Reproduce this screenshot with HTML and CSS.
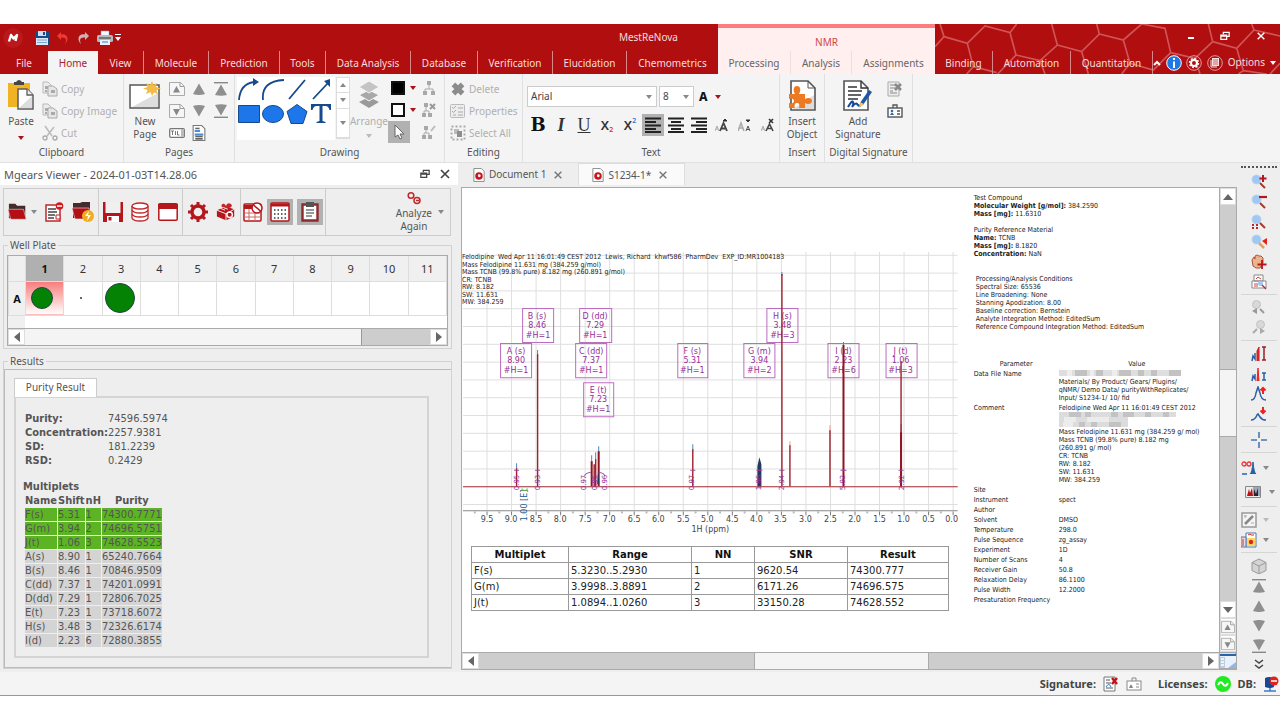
FILE: index.html
```html
<!DOCTYPE html>
<html lang="en">
<head>
<meta charset="utf-8">
<title>MestReNova</title>
<link rel="stylesheet" href="styles.css">
</head>
<body>
<svg class="sprite" aria-hidden="true">
  <defs>
    <symbol id="logo" viewBox="0 0 22 22"><circle cx="11" cy="11" r="10" fill="#bb181b"/><path d="M7 14.500L9 8l2.500 3.500L15 8l-1.500 6" fill="none" stroke="#fff" stroke-width="2.400" stroke-linejoin="round"/></symbol>
    <symbol id="save" viewBox="0 0 14 14"><path d="M0 0h14v14H0z" fill="#174a86"/><path d="M3 0h8v5H3z" fill="#cfe0f2"/><path d="M8 1h2v3H8z" fill="#174a86"/><path d="M1 7h12v7H1z" fill="#d8e8f8"/><path d="M2 9h10M2 11.500h10" stroke="#7fa6cc"/></symbol>
    <symbol id="undo" viewBox="0 0 12 12"><path d="M0 4l4-4v2.500c6-1 9 4 4 9.500 2-4 1-7-4-6.500V8z" fill="#ee3a34"/></symbol>
    <symbol id="redo" viewBox="0 0 12 12"><path d="M12 4L8 0v2.500C2 1.500-1 6.500 4 12 2 8 3 5 8 5.500V8z" fill="#c9b5b5"/></symbol>
    <symbol id="print" viewBox="0 0 16 14"><path d="M4 0h8v5H4z" fill="#f4f8ff" stroke="#8ab" stroke-width=".5"/><rect y="4" width="16" height="7" rx="1.500" fill="#b5b8bc"/><path d="M2 6h12v2H2z" fill="#777"/><path d="M3 9h10v5H3z" fill="#e8f2ff"/><path d="M5 11h6" stroke="#57a"/></symbol>
    <symbol id="paste" viewBox="0 0 26 30"><path d="M0 3h22v24H0z" fill="#f0b323"/><path d="M6 4V2h2q3-4 6 0h2v3H6z" fill="#454545"/><path d="M10 9h9l6 6v14H10z" fill="#fff" stroke="#5c5c5c" stroke-width="1.500"/><path d="M19 9v6h6" fill="#eee" stroke="#5c5c5c" stroke-width="1.300"/><path d="M11 28L24 16v12z" fill="#ddd"/></symbol>
    <symbol id="copy" viewBox="0 0 16 16"><path d="M1 1h5l3 3v8H1z" fill="#ececec" stroke="#b9b9b9"/><path d="M6 5h5l4 3v7H6z" fill="#e6e6e6" stroke="#aaa"/><path d="M3 5h3v3H3zM9 9h4v3H9zM3 9h2v2H3z" fill="#aaa"/></symbol>
    <symbol id="cut" viewBox="0 0 16 16"><path d="M3 1l7 10M12 2L5 11" stroke="#bbb" stroke-width="1.500"/><circle cx="3" cy="13" r="2" fill="none" stroke="#aaa" stroke-width="1.300"/><circle cx="13" cy="13" r="2" fill="none" stroke="#aaa" stroke-width="1.300"/></symbol>
    <symbol id="newpage" viewBox="0 0 32 28"><path d="M1 4h29v23H1z" fill="#fff" stroke="#555" stroke-width="1.500"/><path d="M3 26L29 12v14z" fill="#ddd"/><path d="M23 0l1.500 4L28 2l-1 4 5 1.500-4.500 1.800L29 13l-4-1.500L23 15l-1.500-4L17 13l1.500-4L14 7.500 18.500 6 17 2l4 2z" fill="#f4bb45"/></symbol>
    <symbol id="pgup" viewBox="0 0 16 14"><path d="M.5.500h11l4 4v9H.5z" fill="#f6f6f6" stroke="#aaa"/><path d="M11 .500v4h4" fill="none" stroke="#999"/><path d="M4 10.500L7.500 4l3.500 6.500z" fill="#888"/></symbol>
    <symbol id="pgdown" viewBox="0 0 16 14"><path d="M.5.500h11l4 4v9H.5z" fill="#f6f6f6" stroke="#aaa"/><path d="M11 .500v4h4" fill="none" stroke="#999"/><path d="M4 5l3.500 6.500L11 5z" fill="#888"/></symbol>
    <symbol id="up" viewBox="0 0 14 14"><path d="M7 1.500L13 12q-6 2-12 0z" fill="#8f8f8f"/></symbol>
    <symbol id="down" viewBox="0 0 14 14"><path d="M7 12.500L13 2Q7 0 1 2z" fill="#8f8f8f"/></symbol>
    <symbol id="top" viewBox="0 0 14 14"><path d="M0 .700h14" stroke="#888" stroke-width="1.400"/><path d="M7 2.500l6 10.500q-6 1.500-12 0z" fill="#8f8f8f"/></symbol>
    <symbol id="bottom" viewBox="0 0 14 14"><path d="M0 13.300h14" stroke="#888" stroke-width="1.400"/><path d="M7 11.500L13 1Q7-.500 1 1z" fill="#8f8f8f"/></symbol>
    <symbol id="titlebox" viewBox="0 0 16 10"><rect x=".7" y=".7" width="14.600" height="8.600" rx="1" fill="#fff" stroke="#777" stroke-width="1.300"/><path d="M2 3h3M3.500 3v4M6.500 3v4M8.500 3v4h2" stroke="#777" fill="none"/><path d="M12 1v8h3V1z" fill="#bbb"/></symbol>
    <symbol id="report" viewBox="0 0 12 15"><path d="M.5.500h8l3 3v11H.5z" fill="#fff" stroke="#777"/><path d="M2.500 3h4M2.500 11h7M2.500 13h7" stroke="#333"/><path d="M2 4.500h5v2H2zM2 8h8v2H2z" fill="#4b8ddd"/></symbol>
    <symbol id="shapes" viewBox="0 0 96 62"><g fill="none" stroke="#154a8c" stroke-width="1.800"><path d="M2 22Q3 6 17 4M26 22Q24 3 47 2M52 21L68 2M76 21L91 5"/></g><path d="M16 0l6 4-6 4zM93 1v8l-6-6z" fill="#154a8c"/><g fill="#1e77ea" stroke="#154a8c"><path d="M1.500 27.500h21v17h-21z"/><ellipse cx="36" cy="36" rx="10.500" ry="8.500"/><path d="M60 26.500l10 7-4 12H54l-4-12z"/></g><path d="M74 26h20v6h-1.500q-1-4-4-4h-3v15l3 1v1h-9v-1l3-1V28h-3q-3 0-4 4H74z" fill="#154a8c"/></symbol>
    <symbol id="layers" viewBox="0 0 20 28"><path d="M0 21l10-5 10 5-10 6z" fill="#9a9a9a"/><path d="M0 14l10-5 10 5-10 6z" fill="#a8a8a8" stroke="#f4f4f4"/><path d="M0 6l10-6 10 6-10 6z" fill="#c4c4c4" stroke="#f4f4f4"/></symbol>
    <symbol id="tree" viewBox="0 0 14 14"><path d="M7 4v4M3 11V8h8v3" fill="none" stroke="#aaa"/><path d="M5 0h4v4H5zM1 10h4v4H1zM9 10h4v4H9z" fill="#a8a8a8"/></symbol>
    <symbol id="treex" viewBox="0 0 14 14"><path d="M4 4v4M2 11V8h5v3" fill="none" stroke="#aaa"/><path d="M2 0h4v4H2zM0 10h4v4H0zM6 10h4v4H6z" fill="#a8a8a8"/><path d="M8 1l5 5M13 1L8 6" stroke="#999" stroke-width="2"/></symbol>
    <symbol id="treeedit" viewBox="0 0 14 14"><path d="M4 5v3M2 11V8h5v3" fill="none" stroke="#aaa"/><path d="M2 1h4v4H2zM0 10h4v4H0zM6 10h4v4H6z" fill="#a8a8a8"/><path d="M13 1L9 6" stroke="#bbb" stroke-width="2"/></symbol>
    <symbol id="cursor" viewBox="0 0 12 16"><path d="M2 1v12l3-2 2 4 2-1-2-4h4z" fill="#fff" stroke="#666"/></symbol>
    <symbol id="cross" viewBox="0 0 14 14"><path d="M3 3l8 8M11 3l-8 8" stroke="#8c8c8c" stroke-width="4.500"/></symbol>
    <symbol id="props" viewBox="0 0 16 16"><rect x=".5" y="1.500" width="14" height="13" rx="1" fill="#ededed" stroke="#bbb"/><path d="M2 4l1.500 1.500L6 3M2 8l1.500 1.500L6 7M3 12h3M8 5h5M8 9h5M8 12h5" stroke="#aaa" fill="none"/></symbol>
    <symbol id="selall" viewBox="0 0 16 16"><path d="M1.500 1.500h13v13h-13z" fill="none" stroke="#aaa" stroke-width="2" stroke-dasharray="2 2"/><path d="M4 4h5v5H4z" fill="#bbb"/><path d="M7 6h5v6H7z" fill="#8e8e8e"/></symbol>
    <symbol id="left" viewBox="0 0 16 16"><path d="M0 1.500h16M0 5h11M0 8.500h16M0 12h11M0 15h16" stroke="#222" stroke-width="1.800"/></symbol>
    <symbol id="center" viewBox="0 0 16 16"><path d="M0 1.500h16M3 5h10M0 8.500h16M3 12h10M0 15h16" stroke="#222" stroke-width="1.800"/></symbol>
    <symbol id="right" viewBox="0 0 16 16"><path d="M0 1.500h16M5 5h11M0 8.500h16M5 12h11M0 15h16" stroke="#222" stroke-width="1.800"/></symbol>
    <symbol id="puzzle" viewBox="0 0 30 32"><path d="M4 1h17l7 7v22H4z" fill="#fff" stroke="#555" stroke-width="1.600"/><path d="M6 29L27 15v14z" fill="#ddd"/><path d="M21 1v7h7" fill="none" stroke="#555"/><path d="M2 14h6c-2-3-2-8 2-8s4 5 2 8h6v5c3-2 7-1 7 2s-4 4-7 2v5h-6c1-3 0-5-2-5s-3 2-2 5H2v-5c3 1 5 0 5-2s-2-3-5-2z" fill="#ec7a22"/></symbol>
    <symbol id="sign" viewBox="0 0 30 32"><path d="M1 1h17l7 7v22H1z" fill="#fff" stroke="#555" stroke-width="1.600"/><path d="M18 1v7h7M5 7h9M5 11h14M5 15h13M5 19h10" fill="none" stroke="#333" stroke-width="1.400"/><path d="M5 27q4-7 5-5t-1 5q4-5 5-3t4 2" fill="none" stroke="#164a94" stroke-width="2"/><path d="M17 23l9-13 3 2-9 13z" fill="#1d57ac"/><path d="M17 22l4 2-5 4z" fill="#f3c265"/></symbol>
    <symbol id="signx" viewBox="0 0 16 16"><path d="M1 1h11v14H1z" fill="#eee" stroke="#aaa"/><path d="M3 4h5M3 7h6M3 12h7M3 10h3" stroke="#888"/><path d="M8 3l6 6M14 3L8 9" stroke="#888" stroke-width="2.500"/></symbol>
    <symbol id="signred" viewBox="0 0 16 16"><path d="M1 1h11v14H1z" fill="#fff" stroke="#777"/><path d="M3 4h4M3 7h5M3 12h7" stroke="#555"/><path d="M3 11q3-5 5 0" stroke="#37a" fill="none"/><path d="M9 2l5 6M14 2L9 8" stroke="#c4121c" stroke-width="2.500"/></symbol>
    <symbol id="badge" viewBox="0 0 16 14"><rect x="1" y="4" width="14" height="9" fill="#fff" stroke="#555" stroke-width="1.400"/><path d="M6 4V1h4v3M10 7h3M10 10h3" stroke="#555" fill="none" stroke-width="1.300"/><circle cx="5" cy="7" r="1.300" fill="#2b6dbb"/><path d="M3 11q2-5 4 0z" fill="#2b6dbb"/></symbol>
    <symbol id="badgegray" viewBox="0 0 16 14"><rect x="1" y="4" width="14" height="9" fill="#fff" stroke="#888"/><path d="M6 4V1h4v3M10 7h3M10 10h3" stroke="#888" fill="none"/><path d="M3 11q2-7 4 0z" fill="#888"/></symbol>
    <symbol id="info" viewBox="0 0 16 16"><circle cx="8" cy="8" r="7.300" fill="#1e78e6" stroke="#fff"/><path d="M8 3v2M8 6.500V13" stroke="#fff" stroke-width="2"/></symbol>
    <symbol id="cog" viewBox="0 0 16 16"><circle cx="8" cy="8" r="7.300" fill="none" stroke="#e39a9c"/><circle cx="8" cy="8" r="3" fill="none" stroke="#fff" stroke-width="2"/><circle cx="8" cy="8" r="4.500" fill="none" stroke="#fff" stroke-width="1.500" stroke-dasharray="1.800 1.700"/></symbol>
    <symbol id="doccirc" viewBox="0 0 16 16"><circle cx="8" cy="8" r="7.300" fill="none" stroke="#e39a9c"/><path d="M5 3h7v8H5z" fill="#f7e3e3"/><path d="M4 5v7h6" fill="none" stroke="#f7e3e3"/><path d="M6 5h5M6 7h5M6 9h5" stroke="#c66"/></symbol>
    <symbol id="restore" viewBox="0 0 12 12"><path d="M4 4V1.500h7v5H8" fill="none" stroke="currentColor" stroke-width="1.500"/><path d="M1 5h7v5H1zM1 6h7" fill="none" stroke="currentColor" stroke-width="1.500"/></symbol>
    <symbol id="close" viewBox="0 0 12 12"><path d="M2 2l8 8M10 2l-8 8" stroke="currentColor" stroke-width="1.700"/></symbol>
    <symbol id="folder" viewBox="0 0 22 20"><path d="M1 4V1h7l2 2h9v14H1z" fill="#452b2b"/><path d="M0 7h17l3 11H3z" fill="#b30f14" stroke="#eee" stroke-width=".6"/></symbol>
    <symbol id="folderb" viewBox="0 0 22 20"><path d="M1 4V1h7l2-1h8v16H1z" fill="#452b2b"/><path d="M0 6h17l2 11H3z" fill="#b30f14" stroke="#eee" stroke-width=".6"/><circle cx="16" cy="14" r="6" fill="#f0ad1f"/><path d="M17 9l-4 5h3l-1 5 4-6h-3z" fill="#fff"/></symbol>
    <symbol id="docminus" viewBox="0 0 20 20"><path d="M2 3h14v16H2z" fill="#fff" stroke="#c0272b" stroke-width="1.500"/><path d="M4 7h8M4 10h9M4 13h7M4 16h6" stroke="#444" stroke-width="1.500"/><circle cx="15.500" cy="4" r="3.800" fill="#d3191e"/><path d="M13 4h5" stroke="#fff" stroke-width="1.500"/><path d="M12 13h4v4h-4z" fill="#fff" stroke="#c0272b"/></symbol>
    <symbol id="floppy" viewBox="0 0 20 20"><path d="M0 0h20v20H0z" fill="#b5161b"/><path d="M2.500 0h15v11h-15z" fill="#f0f0f0"/><path d="M4 14h12v6H4z" fill="#fff"/><path d="M5.500 15h3v3.500h-3z" fill="#b5161b"/></symbol>
    <symbol id="dbase" viewBox="0 0 20 20"><g fill="#fff" stroke="#c0272b" stroke-width="1.300"><path d="M2 4v12q1 3 8 3t8-3V4"/><ellipse cx="10" cy="4" rx="8" ry="3"/><path d="M2 8q1 3 8 3t8-3M2 12q1 3 8 3t8-3" fill="none"/></g></symbol>
    <symbol id="window" viewBox="0 0 20 18"><rect x=".8" y=".8" width="18.400" height="16.400" rx="1" fill="#fff" stroke="#b5161b" stroke-width="1.500"/><path d="M0 1h20v5H0z" fill="#b5161b"/></symbol>
    <symbol id="gear" viewBox="0 0 22 22"><circle cx="11" cy="11" r="6" fill="none" stroke="#b5161b" stroke-width="3.400"/><path d="M11 1v4M11 17v4M1 11h4M17 11h4M4 4l3 3M15 15l3 3M18 4l-3 3M7 15l-3 3" stroke="#b5161b" stroke-width="3"/></symbol>
    <symbol id="boxes" viewBox="0 0 22 20"><path d="M1 8l10-4 9 3v8l-9 4-10-4z" fill="#b5161b"/><path d="M1 8l10 4 9-5M11 12v7" stroke="#fff" fill="none"/><path d="M6 4q0-4 3-3l2 2q2-4 5-2t0 4l-5 2z" fill="#c4262a"/><circle cx="15" cy="13" r="3" fill="none" stroke="#fff" stroke-width="1.500"/><path d="M5 6l5 2M8 5l5 2" stroke="#fff"/></symbol>
    <symbol id="gridno" viewBox="0 0 20 20"><rect x="1" y="2" width="17" height="17" rx="1" fill="#fff" stroke="#b5161b" stroke-width="1.500"/><path d="M1 5h17" stroke="#b5161b" stroke-width="4"/><path d="M6 7v12M12 7v12M1 11h17M1 15h17" stroke="#c66"/><circle cx="14" cy="6" r="5" fill="#fff" stroke="#b5161b" stroke-width="1.500"/><path d="M10.500 3l7 6" stroke="#b5161b" stroke-width="1.500"/></symbol>
    <symbol id="grid" viewBox="0 0 20 20"><rect x="1" y="1" width="18" height="18" rx="1" fill="#fff" stroke="#b5161b" stroke-width="1.500"/><path d="M1 3h18" stroke="#b5161b" stroke-width="3"/><path d="M4 8h13M4 12h13M4 16h13" stroke="#333" stroke-width="1.600" stroke-dasharray="1.500 2"/></symbol>
    <symbol id="clip" viewBox="0 0 18 20"><path d="M1.500 2.500h15v16h-15z" fill="#fff" stroke="#8d2a2f" stroke-width="2.400"/><path d="M5 0h8v5H5z" fill="#555"/><path d="M5 8h8M5 11h8M5 14h6" stroke="#777" stroke-width="1.300"/></symbol>
    <symbol id="gears" viewBox="0 0 14 13"><g fill="none" stroke="#c0272b" stroke-width="1.500"><circle cx="4" cy="4" r="2.800"/><circle cx="10" cy="9" r="3"/><path d="M9 9h3"/></g></symbol>
    <symbol id="doc" viewBox="0 0 12 15"><path d="M.5.500h8l3 3v11H.5z" fill="#fff" stroke="#888"/><circle cx="6" cy="8.500" r="4" fill="#c8161c"/><circle cx="6.300" cy="8.300" r="1.500" fill="#fff"/></symbol>
    <symbol id="lens" viewBox="0 0 16 16"><circle cx="5.500" cy="5.500" r="4.500" fill="#9ec8f5" stroke="#bcd3ea"/><path d="M9 9l5 5" stroke="#a33a2a" stroke-width="2"/></symbol>
    <symbol id="zin" viewBox="0 0 16 16"><use href="#lens"/><path d="M12 1v7M8.500 4.500h7" stroke="#b3161c" stroke-width="2"/></symbol>
    <symbol id="zout" viewBox="0 0 16 16"><use href="#lens"/><path d="M8 3h8" stroke="#b3161c" stroke-width="2.200"/></symbol>
    <symbol id="zsel" viewBox="0 0 16 16"><use href="#lens"/><path d="M1 10h2v2H1zM5 10h2v2H5zM1 13h2v2H1zM5 13h2v2H5z" fill="#c0272b"/></symbol>
    <symbol id="zprev" viewBox="0 0 16 16"><circle cx="5.500" cy="5.500" r="4.500" fill="#9ec8f5" stroke="#bcd3ea"/><path d="M11 7l5-3v7z" fill="#e2231a"/><path d="M8 9l5 5" stroke="#e3a15c" stroke-width="2.500"/></symbol>
    <symbol id="pan" viewBox="0 0 16 16"><path d="M2 12L1 6l2-3 1 2V2l2-1 2 1 2 0 2 2v5l-3 5H5z" fill="#efb38c" stroke="#a4563a"/><path d="M11 6v9M6.500 10.500h9" stroke="#b3161c" stroke-width="1.800"/></symbol>
    <symbol id="pagezoom" viewBox="0 0 16 16"><path d="M3 1h9v6H3zM1 7h14v7H1z" fill="#fff" stroke="#888"/><path d="M5 5l2-2 3 2M3 10h4M3 12h4" stroke="#c44" fill="none"/><circle cx="9.500" cy="9.500" r="2.500" fill="#9ec8f5"/><path d="M11 11l4 4" stroke="#a33" stroke-width="1.500"/></symbol>
    <symbol id="histback" viewBox="0 0 16 16"><circle cx="5.500" cy="4.500" r="4" fill="#d8d8d8" stroke="#c2c2c2"/><path d="M1 11l5-3v6z" fill="#999"/><path d="M9 9l4 4" stroke="#999" stroke-width="2"/></symbol>
    <symbol id="histfwd" viewBox="0 0 16 16"><circle cx="9.500" cy="4.500" r="4" fill="#d8d8d8" stroke="#c2c2c2"/><path d="M9 8v6l5-3z" fill="#aaa"/><path d="M6 9l-4 4" stroke="#aaa" stroke-width="2"/></symbol>
    <symbol id="fit1" viewBox="0 0 16 16"><path d="M1 15l1-5 2 3V7" stroke="#2860a8" fill="none" stroke-width="1.500"/><path d="M6 15V5l2-4v14" fill="#e22" stroke="#b22"/><path d="M11 1h4M13 1v13M11 14h4" stroke="#922" stroke-width="1.500"/></symbol>
    <symbol id="fit2" viewBox="0 0 16 16"><path d="M1 15l1-5 2 3V8" stroke="#2860a8" fill="none" stroke-width="1.500"/><path d="M6 15l1-13 1 13" fill="#e22" stroke="#e22"/><path d="M11 7h4M13 7v7M11 14h4" stroke="#2860a8" stroke-width="1.500"/></symbol>
    <symbol id="incr" viewBox="0 0 16 16"><path d="M0 14q4 0 5-7l2-6 2 6q1 7 6 7" stroke="#2860a8" fill="none" stroke-width="1.500"/><path d="M12 8V3M9.500 4.500L12 2l2.500 2.500" stroke="#e22" stroke-width="2" fill="none"/></symbol>
    <symbol id="decr" viewBox="0 0 16 16"><path d="M0 14q4 0 6-5l1-1 2 3q2 3 6 3" stroke="#2860a8" fill="none" stroke-width="1.500"/><path d="M12 1v5M9.500 4.500L12 7l2.500-2.500" stroke="#e22" stroke-width="2" fill="none"/></symbol>
    <symbol id="hair" viewBox="0 0 16 16"><path d="M8 0v6M8 10v6M0 8h6M10 8h6" stroke="#4a78b0" stroke-width="1.600"/></symbol>
    <symbol id="phase" viewBox="0 0 16 16"><circle cx="3" cy="4" r="2" fill="none" stroke="#e33" stroke-width="1.300"/><circle cx="8" cy="4" r="2" fill="none" stroke="#e33" stroke-width="1.300"/><path d="M1 14h5" stroke="#2860a8" stroke-width="1.500"/><path d="M9 14q2-1 3-12 1 11 3 12" fill="#2860a8" stroke="#2860a8"/></symbol>
    <symbol id="stack" viewBox="0 0 16 16"><path d="M.5 2.500h15v11H.5z" fill="#eee" stroke="#888"/><path d="M2 12l2-7 1 4 2-5 1 8z" fill="#b11"/><path d="M8 3h7v9H8z" fill="#9ab"/><path d="M9 12V5l2 5 2-6v8z" fill="#223"/></symbol>
    <symbol id="crossout" viewBox="0 0 16 16"><path d="M1 1h14v14H1z" fill="#f4f4f4" stroke="#999" stroke-width="1.500"/><path d="M4 12l8-8" stroke="#888" stroke-width="2.500"/><path d="M3 4h3M4 3v3M10 11h3" stroke="#aaa"/></symbol>
    <symbol id="map" viewBox="0 0 16 16"><path d="M5 1h10v14H5z" fill="#fff" stroke="#4a78b0"/><path d="M0 5h5v10H0z" fill="#ebd5da" stroke="#4a78b0"/><path d="M2 14V7M7 3l2-1 1 1h3" stroke="#c33" fill="none"/><path d="M6 6h8v8H6z" fill="#ffd65c"/><circle cx="10" cy="10" r="2.200" fill="#d22"/></symbol>
    <symbol id="cube" viewBox="0 0 16 16"><path d="M8 1l7 3.500v8L8 16l-7-3.500v-8z" fill="#d4d4d4" stroke="#999"/><path d="M1 4.500L8 8l7-3.500M8 8v8" fill="none" stroke="#999"/></symbol>
    <symbol id="more" viewBox="0 0 10 12"><path d="M1 2l4 3 4-3M1 7l4 3 4-3" fill="none" stroke="#444" stroke-width="1.500"/></symbol>
    <symbol id="layout" viewBox="0 0 16 14"><path d="M0 0h16v14H0z" fill="#e9f2fc"/><path d="M0 1h16" stroke="#2e62a8" stroke-width="2"/><path d="M0 3h5v11H0z" fill="#bcd"/><path d="M1 5h3M1 8h3M1 11h3" stroke="#fff" stroke-width="1.500"/><path d="M8 14l8-6v6z" fill="#8db9ea"/></symbol>
    <symbol id="license" viewBox="0 0 16 16"><circle cx="8" cy="8" r="8" fill="#22ea22"/><path d="M3 9q2.500-5 5-1t5-1" fill="none" stroke="#fff" stroke-width="2"/></symbol>
    <symbol id="dbmin" viewBox="0 0 16 16"><path d="M2 2q4-2 9 0v9q-4 2-9 0z" fill="#164a94"/><path d="M1 15h12M7 12v3" stroke="#3c7ad0" stroke-width="1.500"/><circle cx="11" cy="5" r="4.500" fill="#e2231a"/><path d="M8 5h6" stroke="#fff" stroke-width="1.500"/></symbol>
    <symbol id="fontup" viewBox="0 0 14 14"><path d="M0 13l2-5 2 5M1 11h2" stroke="#aaa" fill="none"/><path d="M5 13L8.500 5l3.500 8M6 10.500h5" stroke="#444" fill="none" stroke-width="1.800"/><path d="M8 3l2-2 2 2z" fill="#333" stroke="#333"/></symbol>
    <symbol id="fontdown" viewBox="0 0 14 14"><path d="M0 13l3-8 3 8M1 10h4" stroke="#aaa" fill="none" stroke-width="1.600"/><path d="M8 13l2-5 2 5M8.500 11.500h3" stroke="#555" fill="none"/><path d="M8 2l2 2 2-2z" fill="#333" stroke="#333"/></symbol>
    <symbol id="fontclear" viewBox="0 0 14 14"><path d="M0 13l2-5 2 5M1 11h2" stroke="#aaa" fill="none"/><path d="M5 13l3.500-7 3.500 7M6 10.500h5" stroke="#444" fill="none" stroke-width="1.600"/><path d="M8 1l4 4M12 1L8 5" stroke="#333" stroke-width="1.600"/></symbol>
  </defs>
</svg>

<div class="app">
  <header class="header">
    <section class="head head-main">
      <div class="quick">
        <svg class="i22"><use href="#logo"/></svg>
        <button class="flat save" aria-label="Save"><svg class="i14"><use href="#save"/></svg></button>
        <button class="flat" aria-label="Undo"><svg class="i12"><use href="#undo"/></svg></button>
        <button class="flat" aria-label="Redo"><svg class="i12"><use href="#redo"/></svg></button>
        <button class="flat" aria-label="Print"><svg class="i16"><use href="#print"/></svg></button>
        <button class="flat more" aria-label="Customize toolbar"><i class="caret light"></i></button>
        <h1 class="title">MestReNova</h1>
      </div>
      <nav class="tabs tabs-main">
        <button class="tab plain">File</button><button class="tab active">Home</button><button class="tab">View</button><button class="tab">Molecule</button><button class="tab">Prediction</button><button class="tab">Tools</button><button class="tab">Data Analysis</button><button class="tab">Database</button><button class="tab">Verification</button><button class="tab">Elucidation</button><button class="tab plain">Chemometrics</button>
      </nav>
    </section>
    <section class="head head-nmr">
      <div class="nmr">NMR</div>
      <nav class="tabs tabs-nmr"><button class="tab">Processing</button><button class="tab">Analysis</button><button class="tab plain">Assignments</button></nav>
    </section>
    <section class="head head-end">
      <svg class="hex" viewBox="15 12 1035 150" preserveAspectRatio="none" aria-hidden="true"><path d="M30 12L42 50 15 80M42 50l70 20 53-52 75 20 20-26M112 70l18 70 70 18M130 140l-20 22M240 38l18 67-55 57M258 105l72 17 52-47-17-63M382 75l73 20 53-53-8-30M508 42l72 18 55-48 70 13 17 73-52 52-70-20-20-70M330 122l15 40M455 95l20 67M600 130l-25 32M722 98l73 17 53-50-13-53M848 65l72 20 52-55-7-18M972 30l78 18M920 85l20 67-15 10M940 152l70 10M1050 130l-30 32M795 115l15 47"/></svg>
      <div class="window-buttons">
        <button class="flat" aria-label="Minimize"><i class="dash"></i></button>
        <button class="flat" aria-label="Restore"><svg class="i10"><use href="#restore"/></svg></button>
        <button class="flat" aria-label="Close"><svg class="i10"><use href="#close"/></svg></button>
      </div>
      <nav class="tabs tabs-end">
        <button class="tab">Binding</button><button class="tab">Automation</button><button class="tab">Quantitation</button>
        <div class="tools">
          <button class="flat" aria-label="Collapse ribbon"><svg class="i8" viewBox="0 0 8 8"><path d="M1 6l3-3 3 3" fill="none" stroke="#fff" stroke-width="2"/></svg></button>
          <button class="flat" aria-label="Information"><svg class="i16"><use href="#info"/></svg></button>
          <button class="flat" aria-label="Settings"><svg class="i16"><use href="#cog"/></svg></button>
          <button class="flat" aria-label="Documents"><svg class="i16"><use href="#doccirc"/></svg></button>
          <button class="flat options">Options <i class="caret light"></i></button>
        </div>
      </nav>
    </section>
  </header>

  <div class="ribbon">
    <section class="group g-clip">
      <div class="body">
        <button class="big"><svg class="i-paste"><use href="#paste"/></svg><span>Paste</span><i class="caret red"></i></button>
        <div class="rows">
          <button class="row-btn" disabled><svg class="i16"><use href="#copy"/></svg>Copy</button>
          <button class="row-btn" disabled><svg class="i16"><use href="#copy"/></svg>Copy Image</button>
          <button class="row-btn" disabled><svg class="i16"><use href="#cut"/></svg>Cut</button>
        </div>
      </div>
      <h2 class="name">Clipboard</h2>
    </section>
    <section class="group g-pages">
      <div class="body">
        <button class="big"><svg class="i-page"><use href="#newpage"/></svg><span>New<br>Page</span></button>
        <div class="icons3">
          <button class="flat" aria-label="Page up"><svg class="i16"><use href="#pgup"/></svg></button>
          <button class="flat" aria-label="Move up"><svg class="i14"><use href="#up"/></svg></button>
          <button class="flat" aria-label="Move to top"><svg class="i14"><use href="#top"/></svg></button>
          <button class="flat" aria-label="Page down"><svg class="i16"><use href="#pgdown"/></svg></button>
          <button class="flat" aria-label="Move down"><svg class="i14"><use href="#down"/></svg></button>
          <button class="flat" aria-label="Move to bottom"><svg class="i14"><use href="#bottom"/></svg></button>
          <button class="flat" aria-label="Page title"><svg class="i16"><use href="#titlebox"/></svg></button>
          <button class="flat" aria-label="Report"><svg class="i16"><use href="#report"/></svg></button>
        </div>
      </div>
      <h2 class="name">Pages</h2>
    </section>
    <section class="group g-draw">
      <div class="body">
        <button class="gallery" aria-label="Shapes"><svg><use href="#shapes"/></svg></button>
        <div class="spin"><button aria-label="Previous shapes"><i class="caret gray upward"></i></button><button aria-label="Next shapes"><i class="caret gray"></i></button><button class="tall" aria-label="All shapes"><i class="caret gray"></i></button></div>
        <button class="big arrange" disabled><svg class="i-layers"><use href="#layers"/></svg><span>Arrange</span><i class="caret pale"></i></button>
        <div class="colors">
          <button class="flat" aria-label="Fill color"><i class="swatch full"></i><i class="caret red"></i></button>
          <button class="flat" aria-label="Line color"><i class="swatch"></i><i class="caret red"></i></button>
          <button class="flat pressed cursor" aria-label="Select"><svg class="i16"><use href="#cursor"/></svg></button>
        </div>
        <div class="rows trees">
          <button class="flat" aria-label="Group"><svg class="i14"><use href="#tree"/></svg></button>
          <button class="flat" aria-label="Ungroup"><svg class="i14"><use href="#treex"/></svg></button>
          <button class="flat" aria-label="Edit group"><svg class="i14"><use href="#treeedit"/></svg></button>
        </div>
      </div>
      <h2 class="name">Drawing</h2>
    </section>
    <section class="group g-edit">
      <div class="body"><div class="rows">
        <button class="row-btn" disabled><svg class="i16"><use href="#cross"/></svg>Delete</button>
        <button class="row-btn" disabled><svg class="i16"><use href="#props"/></svg>Properties</button>
        <button class="row-btn" disabled><svg class="i16"><use href="#selall"/></svg>Select All</button>
      </div></div>
      <h2 class="name">Editing</h2>
    </section>
    <section class="group g-text">
      <div class="body">
        <div class="line">
          <label class="combo wide"><select aria-label="Font"><option>Arial</option></select></label>
          <label class="combo"><select aria-label="Font size"><option>8</option></select></label>
          <button class="flat fontcolor" aria-label="Font color">A <i class="caret red"></i></button>
        </div>
        <div class="line formats">
          <button class="flat serif bold">B</button><button class="flat serif ital">I</button><button class="flat serif under">U</button>
          <button class="flat script first">X<sub>2</sub></button><button class="flat script">X<sup>2</sup></button>
          <button class="flat pressed align" aria-label="Align left"><svg class="i16"><use href="#left"/></svg></button>
          <button class="flat align" aria-label="Center"><svg class="i16"><use href="#center"/></svg></button>
          <button class="flat align" aria-label="Align right"><svg class="i16"><use href="#right"/></svg></button>
          <button class="flat first" aria-label="Grow font"><svg class="i14"><use href="#fontup"/></svg></button>
          <button class="flat" aria-label="Shrink font"><svg class="i14"><use href="#fontdown"/></svg></button>
          <button class="flat" aria-label="Clear font"><svg class="i14"><use href="#fontclear"/></svg></button>
        </div>
      </div>
      <h2 class="name">Text</h2>
    </section>
    <section class="group g-insert">
      <div class="body"><button class="big"><svg class="i30"><use href="#puzzle"/></svg><span>Insert<br>Object</span></button></div>
      <h2 class="name">Insert</h2>
    </section>
    <section class="group g-sign">
      <div class="body">
        <button class="big"><svg class="i30"><use href="#sign"/></svg><span>Add<br>Signature</span></button>
        <div class="rows"><button class="flat" aria-label="Remove signature"><svg class="i16"><use href="#signx"/></svg></button><button class="flat" aria-label="Identity"><svg class="i16"><use href="#badge"/></svg></button></div>
      </div>
      <h2 class="name">Digital Signature</h2>
    </section>
  </div>

  <main class="workspace">
    <aside class="viewer">
      <div class="viewer-title"><h2>Mgears Viewer - 2024-01-03T14.28.06</h2>
        <button class="flat" aria-label="Float panel"><svg class="i10"><use href="#restore"/></svg></button>
        <button class="flat" aria-label="Close panel"><svg class="i12"><use href="#close"/></svg></button></div>
      <div class="toolbar">
        <div class="tb t1"><button class="flat" aria-label="Open"><svg class="i20"><use href="#folder"/></svg><i class="caret gray"></i></button><button class="flat" aria-label="Remove"><svg class="i20"><use href="#docminus"/></svg></button><button class="flat" aria-label="Quick open"><svg class="i22"><use href="#folderb"/></svg></button></div>
        <div class="tb t2"><button class="flat" aria-label="Save"><svg class="i20"><use href="#floppy"/></svg></button><button class="flat" aria-label="Database"><svg class="i20"><use href="#dbase"/></svg></button><button class="flat" aria-label="Window"><svg class="i20"><use href="#window"/></svg></button></div>
        <div class="tb t3"><button class="flat" aria-label="Settings"><svg class="i22"><use href="#gear"/></svg></button><button class="flat" aria-label="Plugins"><svg class="i20"><use href="#boxes"/></svg></button></div>
        <div class="tb t4"><button class="flat" aria-label="Clear plate"><svg class="i20"><use href="#gridno"/></svg></button><button class="flat pressed" aria-label="Well plate"><svg class="i20"><use href="#grid"/></svg></button><button class="flat pressed" aria-label="Results"><svg class="i20"><use href="#clip"/></svg></button></div>
        <div class="tb t5"><button class="flat again"><svg class="i14"><use href="#gears"/></svg><span>Analyze<br>Again</span></button><i class="caret gray"></i></div>
      </div>
      <fieldset class="box plate-box"><legend>Well Plate</legend>
        <div class="plate-frame">
          <table class="plate">
            <thead><tr><th class="corner"></th><th class="sel">1</th><th>2</th><th>3</th><th>4</th><th>5</th><th>6</th><th>7</th><th>8</th><th>9</th><th>10</th><th>11</th></tr></thead>
            <tbody><tr><th>A</th><td class="hot"><i class="well"></i></td><td><i class="well dot"></i></td><td><i class="well large"></i></td><td></td><td></td><td></td><td></td><td></td><td></td><td></td><td></td></tr></tbody>
          </table>
          <div class="plate-rest"></div>
          <div class="hscroll pale"><button aria-label="Scroll left"><i class="arrow l"></i></button><span class="p-track"></span><span class="p-thumb"></span><button aria-label="Scroll right"><i class="arrow r"></i></button></div>
        </div>
      </fieldset>
      <fieldset class="box results"><legend>Results</legend>
        <div class="results-frame">
          <button class="result-tab">Purity Result</button>
          <div class="result-body">
            <table class="summary">
              <tr><th>Purity:</th><td>74596.5974</td></tr><tr><th>Concentration:</th><td>2257.9381</td></tr><tr><th>SD:</th><td>181.2239</td></tr><tr><th>RSD:</th><td>0.2429</td></tr>
            </table>
            <h3>Multiplets</h3>
            <table class="mult">
              <thead><tr><th>Name</th><th>Shift</th><th>nH</th><th>Purity</th></tr></thead>
              <tbody>
              <tr class="ok"><td>F(s)</td><td>5.31</td><td>1</td><td>74300.7771</td></tr>
              <tr class="ok"><td>G(m)</td><td>3.94</td><td>2</td><td>74696.5751</td></tr>
              <tr class="ok"><td>J(t)</td><td>1.06</td><td>3</td><td>74628.5523</td></tr>
              <tr><td>A(s)</td><td>8.90</td><td>1</td><td>65240.7664</td></tr>
              <tr><td>B(s)</td><td>8.46</td><td>1</td><td>70846.9509</td></tr>
              <tr><td>C(dd)</td><td>7.37</td><td>1</td><td>74201.0991</td></tr>
              <tr><td>D(dd)</td><td>7.29</td><td>1</td><td>72806.7025</td></tr>
              <tr><td>E(t)</td><td>7.23</td><td>1</td><td>73718.6072</td></tr>
              <tr><td>H(s)</td><td>3.48</td><td>3</td><td>72326.6174</td></tr>
              <tr><td>I(d)</td><td>2.23</td><td>6</td><td>72880.3855</td></tr>
              </tbody>
            </table>
          </div>
        </div>
      </fieldset>
    </aside>

    <section class="document">
      <nav class="doc-tabs">
        <div class="doc-tab"><svg class="i14"><use href="#doc"/></svg><button class="flat">Document 1</button><button class="flat x" aria-label="Close Document 1"><svg class="i10"><use href="#close"/></svg></button></div>
        <div class="doc-tab current"><svg class="i14"><use href="#doc"/></svg><button class="flat">S1234-1*</button><button class="flat x" aria-label="Close S1234-1"><svg class="i10"><use href="#close"/></svg></button></div>
      </nav>
      <div class="view">
        <div class="sheet">
          <div class="sheet-left">
            <svg class="spectrum" viewBox="462 252 496 284" role="img" aria-label="1H NMR spectrum">
              <defs>
                <pattern id="lines" x="486.500" y="254.800" width="24.500" height="17.780" patternUnits="userSpaceOnUse"><path d="M.5 0v18M0 .500h25" stroke="#dedede" fill="none"/></pattern>
                <pattern id="ticks" x="486.500" y="511" width="24.500" height="5" patternUnits="userSpaceOnUse"><path d="M.5 0v4M12.750 0v2" stroke="#777"/></pattern>
              </defs>
              <path d="M463 252h494v258H463z" fill="url(#lines)"/>
              <path d="M463 511h494v5H463z" fill="url(#ticks)"/>
              <path d="M463 510.500h494" stroke="#888"/>
              <g class="meta">
                <text x="462" y="259" xml:space="preserve">Felodipine  Wed Apr 11 16:01:49 CEST 2012  Lewis, Richard  khwf586  PharmDev  EXP_ID:MR1004183</text>
                <text x="462" y="267">Mass Felodipine 11.631 mg (384.259 g/mol)</text>
                <text x="462" y="274">Mass TCNB (99.8% pure) 8.182 mg (260.891 g/mol)</text>
                <text x="462" y="282">CR: TCNB</text><text x="462" y="289">RW: 8.182</text><text x="462" y="297">SW: 11.631</text><text x="462" y="304">MW: 384.259</text>
              </g>
              <g class="boxes">
                <path d="M522.500 308.500h31v34h-31zM579.500 308.500h32v34h-32zM766.500 308.500h31v34h-31zM500.500 343.500h31v34h-31zM575.500 343.500h31v34h-31zM677.500 343.500h30v34h-30zM743.500 343.500h31v34h-31zM827.500 343.500h31v34h-31zM885.500 343.500h31v34h-31zM583.500 382.500h30v34h-30z"/>
                <text x="537" y="319">B (s)</text><text x="537" y="328">8.46</text><text x="538" y="338">#H=1</text>
                <text x="595" y="319">D (dd)</text><text x="595" y="328">7.29</text><text x="595" y="338">#H=1</text>
                <text x="782" y="319">H (s)</text><text x="782" y="328">3.48</text><text x="782" y="338">#H=3</text>
                <text x="516" y="354">A (s)</text><text x="516" y="363">8.90</text><text x="516" y="373">#H=1</text>
                <text x="591" y="354">C (dd)</text><text x="591" y="363">7.37</text><text x="591" y="373">#H=1</text>
                <text x="692" y="354">F (s)</text><text x="692" y="363">5.31</text><text x="692" y="373">#H=1</text>
                <text x="759" y="354">G (m)</text><text x="759" y="363">3.94</text><text x="759" y="373">#H=2</text>
                <text x="843" y="354">I (d)</text><text x="843" y="363">2.23</text><text x="843" y="373">#H=6</text>
                <text x="900" y="354">J (t)</text><text x="900" y="363">1.06</text><text x="900" y="373">#H=3</text>
                <text x="598" y="393">E (t)</text><text x="598" y="402">7.23</text><text x="598" y="412">#H=1</text>
              </g>
              <path d="M516.500 463v6M537.500 350v6M591.500 455v8M595.500 452v8M598.500 446v8M692.500 444v6M781.500 272v4M843 342v5M900.500 424v8" stroke="#4d88b8" fill="none"/>
              <path d="M789.500 441v5M829.500 425v6" stroke="#f59a8c"/>
              <path d="M463 486.500h494" stroke="#a8323a"/>
              <path d="M516.500 468v18M537.500 354v132M594 464v22M595.500 459v27M692.500 449v37M781.500 274v212M789.500 445v41M829.500 430v56M900.500 361v125" stroke="#a01f2b" stroke-width="1.400" fill="none"/>
              <path d="M591.500 461v25M598.500 451v35M843 345v141M900.500 432v54" stroke="#8f1522" stroke-width="2" fill="none"/>
              <path d="M757 486v-20l2-9 2 7v22zM597 484l1-15 1 14z" fill="#213a5e"/>
              <path d="M584.500 476q0-3 6-4M604.500 476q0-3-6-4M756 470h6M514 470h5M535 470h5M690 470h5M779 470h5M840 470h6M898 470h5" stroke="#a343a3" fill="none"/>
              <g class="integrals">
                <text transform="translate(519 490) rotate(-90)">0.95</text><text transform="translate(540 490) rotate(-90)">0.93</text><text transform="translate(586 490) rotate(-90)">0.97</text><text transform="translate(597 490) rotate(-90)">0.96</text><text transform="translate(607 490) rotate(-90)">0.96</text><text transform="translate(694 490) rotate(-90)">0.97</text><text transform="translate(761 490) rotate(-90)">1.96</text><text transform="translate(784 490) rotate(-90)">2.94</text><text transform="translate(845 490) rotate(-90)">5.92</text><text transform="translate(903 490) rotate(-90)">2.92</text>
                <text class="ref" transform="translate(527 521) rotate(-90)">1.00 [E]</text>
              </g>
              <path d="M522 488v2h5v-2" stroke="#6bc04b" fill="none"/>
              <g class="axis">
                <text x="487" y="522">9.5</text><text x="511" y="522">9.0</text><text x="536" y="522">8.5</text><text x="560" y="522">8.0</text><text x="585" y="522">7.5</text><text x="609" y="522">7.0</text><text x="634" y="522">6.5</text><text x="658" y="522">6.0</text><text x="683" y="522">5.5</text><text x="707" y="522">5.0</text><text x="732" y="522">4.5</text><text x="756" y="522">4.0</text><text x="780" y="522">3.5</text><text x="805" y="522">3.0</text><text x="830" y="522">2.5</text><text x="854" y="522">2.0</text><text x="879" y="522">1.5</text><text x="903" y="522">1.0</text><text x="928" y="522">0.5</text><text x="951" y="522">0.0</text>
                <text x="710" y="532">1H (ppm)</text>
              </g>
            </svg>
            <table class="snr">
              <colgroup><col class="c1"><col class="c2"><col class="c3"><col class="c4"><col class="c5"></colgroup>
              <thead><tr><th>Multiplet</th><th>Range</th><th>NN</th><th>SNR</th><th>Result</th></tr></thead>
              <tbody>
              <tr><td>F(s)</td><td>5.3230..5.2930</td><td>1</td><td>9620.54</td><td>74300.777</td></tr>
              <tr><td>G(m)</td><td>3.9998..3.8891</td><td>2</td><td>6171.26</td><td>74696.575</td></tr>
              <tr><td>J(t)</td><td>1.0894..1.0260</td><td>3</td><td>33150.28</td><td>74628.552</td></tr>
              </tbody>
            </table>
          </div>
          <div class="sheet-right">
            <p>Test Compound<br><b>Molecular Weight [g/mol]:</b> 384.2590<br><b>Mass [mg]:</b> 11.6310</p>
            <p>Purity Reference Material<br><b>Name:</b> TCNB<br><b>Mass [mg]:</b> 8.1820<br><b>Concentration:</b> NaN</p>
            <p class="conditions">Processing/Analysis Conditions<br>Spectral Size: 65536<br>Line Broadening: None<br>Stanning Apodization: 8.00<br>Baseline correction: Bernstein<br>Analyte Integration Method: EditedSum<br>Reference Compound Integration Method: EditedSum</p>
            <table class="params">
              <thead><tr><th>Parameter</th><th>Value</th></tr></thead>
              <tbody>
              <tr><td>Data File Name</td><td><svg class="mosaic one" viewBox="0 0 122 5" preserveAspectRatio="none"><path d="M0 0h122v5H0z" fill="#dedede"/><path d="M16 0h12v5H16zM37 0h7v5h-7zM60 0h12v5H60zM79 0h6v5h-6zM92 0h6v5h-6zM110 0h12v5h-12z" fill="#c2c2c2"/><path d="M8 0h5v5H8zM31 0h4v5h-4zM53 0h5v5h-5z" fill="#eee"/></svg>Materials/ By Product/ Gears/ Plugins/<br>qNMR/ Demo Data/ purityWithReplicates/<br>Input/ S1234-1/ 10/ fid</td></tr>
              <tr><td>Comment</td><td>Felodipine Wed Apr 11 16:01:49 CEST 2012<svg class="mosaic two" viewBox="0 0 117 15" preserveAspectRatio="none"><path d="M0 0h117v5H69v10H0z" fill="#dcdcdc"/><path d="M10 0h12v5H10zM26 0h6v5h-6zM52 0h7v5h-7zM64 0h11v5H64zM86 0h6v5h-6zM104 0h6v5h-6zM20 10h6v5h-6zM32 10h6v5h-6zM50 10h12v5H50z" fill="#c3c3c3"/><path d="M5 5h12v5H5zM28 5h22v5H28zM4 10h10v5H4z" fill="#ececec"/></svg>Mass Felodipine 11.631 mg (384.259 g/ mol)<br>Mass TCNB (99.8% pure) 8.182 mg<br>(260.891 g/ mol)<br>CR: TCNB<br>RW: 8.182<br>SW: 11.631<br>MW: 384.259</td></tr>
              <tr><td>Site</td><td></td></tr><tr><td>Instrument</td><td>spect</td></tr><tr><td>Author</td><td></td></tr><tr><td>Solvent</td><td>DMSO</td></tr><tr><td>Temperature</td><td>298.0</td></tr><tr><td>Pulse Sequence</td><td>zg_assay</td></tr><tr><td>Experiment</td><td>1D</td></tr><tr><td>Number of Scans</td><td>4</td></tr><tr><td>Receiver Gain</td><td>50.8</td></tr><tr><td>Relaxation Delay</td><td>86.1100</td></tr><tr><td>Pulse Width</td><td>12.2000</td></tr><tr><td>Presaturation Frequency</td><td></td></tr>
              </tbody>
            </table>
          </div>
        </div>
        <div class="vscroll"><button aria-label="Scroll up"><i class="arrow u"></i></button><span class="v-above"></span><span class="v-thumb"></span><span class="v-below"></span><button aria-label="Scroll down"><i class="arrow d"></i></button><button aria-label="Previous page"><svg class="i14"><use href="#pgup"/></svg></button><button aria-label="Next page"><svg class="i14"><use href="#pgdown"/></svg></button></div>
        <div class="hscroll"><button aria-label="Scroll left"><i class="arrow l"></i></button><span class="h-before"></span><span class="h-thumb"></span><span class="h-after"></span><button aria-label="Scroll right"><i class="arrow r"></i></button></div>
        <button class="corner-btn" aria-label="Page layout"><svg class="i16"><use href="#layout"/></svg></button>
      </div>
    </section>

    <aside class="side">
      <i class="grip"></i>
      <button aria-label="Zoom in"><svg class="i16"><use href="#zin"/></svg></button>
      <button aria-label="Zoom out"><svg class="i16"><use href="#zout"/></svg></button>
      <button aria-label="Zoom area"><svg class="i16"><use href="#zsel"/></svg></button>
      <button aria-label="Previous zoom"><svg class="i16"><use href="#zprev"/></svg></button>
      <button aria-label="Pan"><svg class="i16"><use href="#pan"/></svg></button>
      <button aria-label="Full view"><svg class="i16"><use href="#pagezoom"/></svg></button>
      <hr>
      <button aria-label="Zoom history back"><svg class="i16"><use href="#histback"/></svg></button>
      <button aria-label="Zoom history forward"><svg class="i16"><use href="#histfwd"/></svg></button>
      <hr>
      <button aria-label="Fit to height"><svg class="i16"><use href="#fit1"/></svg></button>
      <button aria-label="Fit to peak"><svg class="i16"><use href="#fit2"/></svg></button>
      <button aria-label="Increase intensity"><svg class="i16"><use href="#incr"/></svg></button>
      <button aria-label="Decrease intensity"><svg class="i16"><use href="#decr"/></svg></button>
      <hr>
      <button aria-label="Crosshair"><svg class="i16"><use href="#hair"/></svg></button>
      <hr>
      <button class="drop high" aria-label="Phase"><svg class="i16"><use href="#phase"/></svg><i class="caret gray"></i></button>
      <button class="drop high wide-drop" aria-label="Stack"><svg class="i16"><use href="#stack"/></svg><i class="caret gray"></i></button>
      <hr>
      <button class="drop" aria-label="Cut regions"><svg class="i16"><use href="#crossout"/></svg><i class="caret pale"></i></button>
      <button class="drop" aria-label="Traces"><svg class="i16"><use href="#map"/></svg><i class="caret gray"></i></button>
      <hr>
      <button aria-label="3D view"><svg class="i16"><use href="#cube"/></svg></button>
      <button aria-label="First spectrum"><svg class="i14"><use href="#top"/></svg></button>
      <button aria-label="Previous spectrum"><svg class="i14"><use href="#up"/></svg></button>
      <button aria-label="Next spectrum"><svg class="i14"><use href="#down"/></svg></button>
      <button aria-label="Last spectrum"><svg class="i14"><use href="#bottom"/></svg></button>
      <button class="last" aria-label="More tools"><svg class="i12"><use href="#more"/></svg></button>
    </aside>
  </main>

  <footer class="status">
    <b>Signature:</b><svg class="i16"><use href="#signred"/></svg><svg class="i16"><use href="#badgegray"/></svg>
    <b class="lic">Licenses:</b><svg class="i16"><use href="#license"/></svg>
    <b>DB:</b><svg class="i16"><use href="#dbmin"/></svg>
  </footer>
</div>
</body>
</html>
```
FILE: styles.css
```css
* { box-sizing: border-box; }
body {
  margin: 0;
  min-height: 100vh;
  padding: 24px 0;
  display: flex;
  flex-direction: column;
  background: #fff;
  color: #555;
  font: 10px/13px "Noto Sans", "Open Sans", sans-serif;
}
.sprite { position: absolute; width: 0; height: 0; }
h1, h2, h3, p { margin: 0; font-size: inherit; font-weight: 400; }
button { font: inherit; color: inherit; margin: 0; padding: 0; border: 0; background: none; }
svg { display: block; flex: none; }
table { border-collapse: collapse; }

.i8 { width: 8px; height: 8px; }
.i10 { width: 10px; height: 10px; }
.i12 { width: 12px; height: 12px; }
.i14 { width: 14px; height: 14px; }
.i16 { width: 16px; height: 16px; }
.i20 { width: 20px; height: 20px; }
.i22 { width: 22px; height: 22px; }
.i30 { width: 30px; height: 32px; }
.i-paste { width: 28px; height: 30px; }
.i-page { width: 32px; height: 30px; }
.i-layers { width: 20px; height: 30px; }

.flat { display: inline-flex; align-items: center; justify-content: center; gap: 3px; }
.pressed { background: #b1b1b1; }
.caret { width: 0; height: 0; border: 3px solid transparent; border-top: 4px solid; border-bottom: 0; }
.caret.light { color: #fff; }
.caret.red { color: #a5121c; }
.caret.gray { color: #888; }
.caret.pale { color: #bbb; }
.caret.upward { transform: rotate(180deg); }

.app { flex: 1; display: flex; flex-direction: column; background: #eee; }

/* Title bar and ribbon tabs */
.header { display: grid; grid-template-columns: minmax(0, 718fr) minmax(0, 217fr) minmax(0, 345fr); color: #f7dddd; }
.head { position: relative; display: grid; grid-template-rows: 27px 23px; background: #b10e10; }
.quick { display: flex; align-items: center; gap: 8px; padding: 0 40px 0 2px; }
.quick .save { margin-left: 3px; }
.quick .more { margin-left: -6px; padding-top: 2px; border-top: 1px solid #fff; }
.title { flex: 1; text-align: right; }
.tabs { display: grid; }
.tabs-main { grid-template-columns: 48fr 50fr 46fr 65fr 71fr 46fr 85fr 67fr 75fr 74fr 91fr; }
.tabs-nmr { grid-template-columns: 73fr 61fr 83fr; }
.tabs-end { grid-template-columns: 58fr 78fr 82fr 127fr; position: relative; }
.tab { border-right: 1px solid #d98788; padding-top: 1px; white-space: nowrap; min-width: 0; }
.tab.plain { border-right: 0; }
.tab.active { background: #f4f4f4; color: #a5242c; border: 0; }
.head-nmr { background: #ffefee; color: #666; }
.head-nmr .tab { border-color: #f2dcdc; }
.nmr { border-top: 4px solid #fb7d7d; padding-top: 8px; text-align: center; color: #d0474a; }
.hex { position: absolute; width: 100%; height: 100%; fill: none; stroke: #cf5557; stroke-width: 5; }
.window-buttons { position: relative; display: flex; justify-content: flex-end; gap: 26px; padding: 0 14px 4px 0; color: #fff; }
.dash { width: 6px; height: 2px; background: #fff; margin-top: 5px; }
.tools { display: flex; align-items: center; justify-content: space-between; padding: 0 4px 0 0; }
.options { gap: 5px; }

/* Ribbon */
.ribbon { display: flex; height: 89px; background: #f4f4f4; border-bottom: 1px solid #e0e0e0; }
.group { display: flex; flex-direction: column; flex: none; border-right: 1px solid #e0e0e0; }
.body { display: flex; flex: 1; padding-top: 4px; }
.name { height: 18px; line-height: 16px; text-align: center; }
.big { display: flex; flex-direction: column; align-items: center; line-height: 13px; padding-top: 2px; }
.big svg { margin-bottom: 5px; }
.big .caret { margin-top: 8px; }
.rows { display: flex; flex-direction: column; }
.rows > button { height: 22px; }
.row-btn { display: flex; align-items: center; gap: 3px; white-space: nowrap; }
button:disabled { color: #b0b0b0; }
.g-clip { width: 124px; }
.g-clip .big { width: 42px; }
.g-pages { width: 111px; }
.g-pages .big { width: 42px; }
.icons3 { display: grid; grid-template-columns: repeat(3, 22px); grid-template-rows: repeat(3, 22px); }
.g-draw { width: 210px; }
.gallery { background: #fff; width: 98px; height: 63px; }
.g-draw .body { padding: 3px 0 0 2px; }
.gallery svg { width: 96px; height: 62px; }
.spin { display: flex; flex-direction: column; width: 14px; height: 62px; margin-left: 1px; border: 1px solid #ddd; background: #fff; }
.spin button { flex: 1; display: grid; place-content: center; border-bottom: 1px solid #ddd; }
.spin .tall { flex: 2; }
.arrange { width: 38px; padding-top: 3px; }
.arrange .caret { margin-top: 6px; }
.colors { display: flex; flex-direction: column; width: 30px; }
.colors button { height: 22px; justify-content: flex-start; gap: 5px; padding-left: 3px; }
.colors .cursor { width: 22px; }
.swatch { width: 14px; height: 14px; border: 2px solid #111; background: #fff; }
.swatch.full { background: #000; }
.trees { padding-left: 4px; }
.g-edit { width: 78px; }
.g-edit .body { padding-left: 5px; }
.g-text { width: 257px; }
.g-text .body { flex-direction: column; gap: 7px; padding: 12px 0 0 4px; }
.line { display: flex; align-items: center; gap: 2px; }
.combo { position: relative; width: 35px; }
.combo.wide { width: 130px; }
.combo select { appearance: none; display: block; width: 100%; height: 21px; padding: 0 3px; border: 1px solid #ccc; border-radius: 0; background: #fff; color: #444; font: inherit; }
.combo::after { content: ""; position: absolute; right: 5px; top: 9px; border: 3px solid transparent; border-top: 4px solid #888; border-bottom: 0; }
.fontcolor { font-weight: 800; font-size: 12px; color: #111; margin-left: 3px; gap: 7px; }
.formats { gap: 1px; }
.formats button { width: 22px; height: 22px; }
.serif { font: 18px/22px "Liberation Serif", serif; color: #333; }
.bold { font-family: "DejaVu Serif", serif; font-weight: 700; color: #111; }
.ital { font-style: italic; font-weight: 700; }
.under { text-decoration: underline; }
.script { font-size: 13px; font-weight: 600; color: #333; gap: 0; }
.script sub, .script sup { font-size: 7px; color: #d33; }
.script sup { color: #37c; align-self: flex-start; }
.script sub { align-self: flex-end; }
.g-insert { width: 45px; }
.g-insert .big { width: 44px; }
.g-sign { width: 88px; }
.g-sign .big { width: 66px; }
.g-sign .rows { margin-left: -4px; }
.g-sign .big svg, .g-insert .big svg { margin-bottom: 3px; }

/* Workspace */
.workspace { flex: 1; display: grid; grid-template-columns: minmax(0, 461fr) minmax(0, 777fr) 42px; }
.viewer { display: flex; flex-direction: column; padding-right: 10px; }
.viewer-title { display: flex; align-items: center; gap: 9px; height: 22px; margin-right: -7px; padding: 0 7px 0 4px; background: #fff; color: #444; font-size: 11px; }
.viewer-title h2 { flex: 1; color: #555; }
.toolbar { display: flex; height: 48px; margin: 3px 0 3px 3px; border: 1px solid #ccc; }
.tb { display: flex; align-items: center; justify-content: space-around; border-right: 1px solid #ccc; }
.t1 { width: 95px; }
.t2 { width: 84px; }
.t3 { width: 58px; }
.t4 { width: 85px; }
.t5 { flex: 1; justify-content: flex-end; gap: 6px; padding-right: 6px; border: 0; }
.tb .pressed { width: 26px; height: 26px; }
.again { flex-direction: column; gap: 2px; }
.box { min-width: 0; margin: 0 0 0 3px; padding: 0 3px 2px 3px; border: 1px solid #d2d2d2; }
.box legend { margin-left: 1px; padding: 0 2px; line-height: 13px; }
.plate-box { margin-right: -1px; }
.plate-frame { margin-top: 3px; border: 1px solid #aaa; }
.plate { width: 100%; table-layout: fixed; font-size: 11px; color: #333; background: #fff; }
.plate th, .plate td { border: 1px solid #ddd; border-top: 0; padding: 0; }
.plate thead th { height: 25px; background: #f0f0f0; font-weight: 400; }
.plate .corner { width: 17px; }
.plate tbody th { background: #f0f0f0; color: #111; }
.plate tbody td { height: 34px; }
.plate thead .sel { background: #b0b0b0; color: #111; font-weight: 700; }
.hot { background: linear-gradient(#f77b7b, #fff); }
.well { display: block; width: 22px; height: 22px; margin: 0 auto 0 5px; border: 1px solid #244; border-radius: 50%; background: #048204; }
.well.large { width: 30px; height: 30px; margin-left: 2px; }
.well.dot { width: 2px; height: 2px; margin-left: 16px; background: #333; border: 0; }
.plate-rest { height: 12px; border-left: 17px solid #f0f0f0; background: #fff; }
.hscroll { display: flex; height: 17px; background: #cdcdcd; border-top: 1px solid #aaa; }
.hscroll button { width: 17px; background: #fff; display: grid; place-content: center; border: 1px solid #ddd; }
.arrow { border: 5px solid transparent; }
.arrow.l { border-right: 6px solid #666; border-left: 0; }
.arrow.r { border-left: 6px solid #666; border-right: 0; }
.arrow.u { border-bottom: 6px solid #666; border-top: 0; }
.arrow.d { border-top: 6px solid #666; border-bottom: 0; }
.p-track { flex: 338; background: #f4f4f4; }
.p-thumb { flex: 69; border-left: 1px solid #999; }
.results { flex: 1; display: flex; margin: 6px -1px 3px 3px; padding: 0; }
.results legend { margin-left: 4px; }
.results-frame { flex: 1; display: flex; flex-direction: column; margin-top: 1px; padding: 8px 22px 9px 9px; border: 1px solid #bbb; border-width: 1px 0 1px 1px; }
.result-tab { align-self: flex-start; position: relative; width: 83px; height: 19px; margin-bottom: -1px; background: #fff; border: 1px solid #ccc; border-bottom: 0; }
.result-body { flex: 1; padding: 14px 8px 0 9px; border: 2px solid #d4d4d4; }
.summary, .mult, .result-body h3 { font-family: "DejaVu Sans Condensed", "DejaVu Sans", sans-serif; font-size: 11px; line-height: 14px; }
.summary th, .mult th { text-align: left; font-weight: 700; padding: 0; }
.summary td { padding: 0; }
.result-body h3 { margin: 12px 0 0 -2px; font-weight: 700; }
.mult { border-collapse: separate; border-spacing: 1px; margin-left: -1px; line-height: 13px; }
.mult thead th { line-height: 12px; }
.mult td { padding: 0; background: #d4d4d4; }
.mult th:last-child { text-align: center; }
.mult .ok td { background: #5cb424; }

/* Document */
.document { display: flex; flex-direction: column; padding: 0 1px 2px 0; }
.doc-tabs { display: flex; align-items: flex-start; height: 24px; padding-left: 3px; }
.doc-tab { display: flex; align-items: center; gap: 3px; height: 22px; padding: 1px 13px 0 8px; }
.doc-tab .x { margin-left: 4px; color: #777; }
.doc-tab.current { background: #fafafa; border: 1px solid #ddd; border-bottom: 0; margin-left: 2px; padding-left: 12px; padding-right: 16px; }
.view { flex: 1; display: grid; grid-template-columns: minmax(0, 1fr) 17px; grid-template-rows: 1fr 17px; border: 1px solid #aaa; background: #fff; }
.sheet { display: grid; grid-template-columns: minmax(0, 496fr) minmax(0, 260fr); }
.sheet-left { padding-top: 64px; }
.spectrum { width: 100%; height: auto; font-family: "DejaVu Sans", sans-serif; font-size: 8px; }
.meta { font-family: "DejaVu Sans Condensed", "DejaVu Sans", sans-serif; font-size: 7px; fill: #222; }
.boxes { text-anchor: middle; fill: #963096; }
.boxes path { fill: none; stroke: #bd6dc0; }
.integrals { font-size: 7px; fill: #963096; }
.integrals .ref { font-size: 8px; fill: #25588f; }
.axis { text-anchor: middle; fill: #444; }
.snr { width: calc(100% - 19px); margin: 10px 10px 0 9px; table-layout: fixed; font: 10px/15px "DejaVu Sans", sans-serif; color: #222; }
.snr th, .snr td { border: 1px solid #999; padding: 0 2px; text-align: left; white-space: nowrap; }
.snr th { text-align: center; color: #111; }
.c1 { width: 97px; }
.c2 { width: 123px; }
.c3 { width: 63px; }
.c4 { width: 93px; }
.sheet-right { padding: 6px 4px 0 15px; font: 7px/8px "DejaVu Sans Condensed", "DejaVu Sans", sans-serif; color: #222; }
.sheet-right p { margin-bottom: 8px; white-space: nowrap; }
.sheet-right .conditions { margin: 17px 0 28px 2px; }
.params { width: 100%; table-layout: fixed; }
.params th, .params td { padding: 1px 0; height: 10px; font-weight: 400; text-align: left; vertical-align: top; white-space: nowrap; }
.params th:first-child { width: 85px; }
.params th { text-align: center; }
.mosaic { height: 6px; margin: 0 0 2px; }
.mosaic.one { width: 122px; }
.mosaic.two { width: 117px; height: 15px; margin-bottom: 1px; }
.vscroll { display: flex; flex-direction: column; background: #cdcdcd; border-left: 1px solid #aaa; }
.vscroll button { height: 17px; background: #fff; display: grid; place-content: center; border: 1px solid #ddd; }
.v-above { flex: 165; }
.v-thumb { flex: 66; background: #f4f4f4; border: 1px solid #aaa; border-width: 1px 0; }
.v-below { flex: 165; }
.h-before { flex: 275; }
.h-thumb { flex: 174; background: #f4f4f4; border: 1px solid #aaa; border-width: 0 1px; }
.h-after { flex: 273; }
.corner-btn { display: grid; place-content: center; background: #ddd; border: 1px solid #aaa; }

/* Right-hand tools */
.side { display: flex; flex-direction: column; padding: 3px 3px 0; }
.grip { height: 2px; margin-bottom: 4px; border-top: 2px dotted #555; }
.side button { display: flex; align-items: center; justify-content: center; height: 20px; }
.side .last { height: 16px; }
.side hr { width: 100%; height: 1px; margin: 2px 0 3px; border: 0; background: #d5d5d5; }
.side .drop { justify-content: flex-start; gap: 6px; }
.side .high { height: 24px; }
.side .wide-drop { padding-left: 4px; gap: 8px; }

.status { display: flex; align-items: center; justify-content: flex-end; gap: 7px; height: 24px; padding-right: 1px; background: #f4f4f4; border-bottom: 1px solid #999; color: #444; font-size: 11px; }
.status .lic { margin-left: 9px; }
```
